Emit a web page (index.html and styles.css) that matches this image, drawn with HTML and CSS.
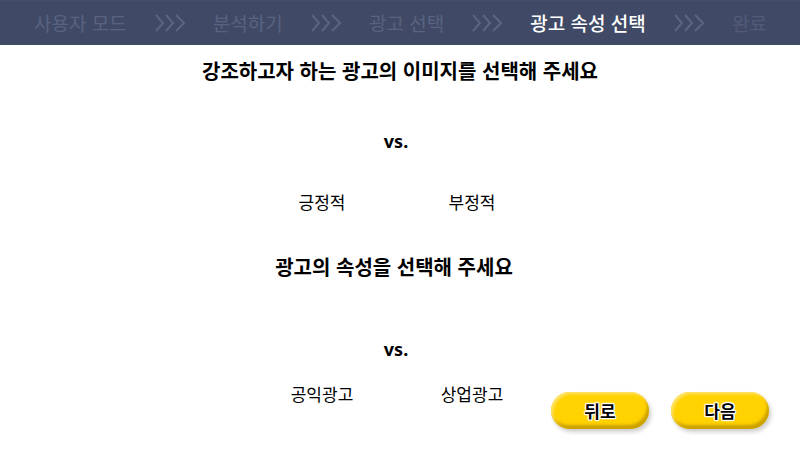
FILE: index.html
```html
<!DOCTYPE html>
<html lang="ko">
<head>
<meta charset="utf-8">
<title>광고 속성 선택</title>
<link rel="stylesheet" href="styles.css">
</head>
<body>
<header>
  <ol class="steps">
    <li>사용자 모드</li>
    <li class="arrow" aria-hidden="true"><svg width="30" height="18" viewBox="0 0 30 18"><path d="M1 1l7 8-7 8M11 1l7 8-7 8M21 1l8 8-8 8"/></svg></li>
    <li>분석하기</li>
    <li class="arrow" aria-hidden="true"><svg width="30" height="18" viewBox="0 0 30 18"><path d="M1 1l7 8-7 8M11 1l7 8-7 8M21 1l8 8-8 8"/></svg></li>
    <li>광고 선택</li>
    <li class="arrow" aria-hidden="true"><svg width="30" height="18" viewBox="0 0 30 18"><path d="M1 1l7 8-7 8M11 1l7 8-7 8M21 1l8 8-8 8"/></svg></li>
    <li class="current" aria-current="step">광고 속성 선택</li>
    <li class="arrow" aria-hidden="true"><svg width="30" height="18" viewBox="0 0 30 18"><path d="M1 1l7 8-7 8M11 1l7 8-7 8M21 1l8 8-8 8"/></svg></li>
    <li class="last">완료</li>
  </ol>
</header>
<main>
  <section class="image-choice">
    <h1>강조하고자 하는 광고의 이미지를 선택해 주세요</h1>
    <p class="versus">vs.</p>
    <div class="options"><span>긍정적</span><span>부정적</span></div>
  </section>
  <section class="type-choice">
    <h2>광고의 속성을 선택해 주세요</h2>
    <p class="versus">vs.</p>
    <div class="options"><span>공익광고</span><span>상업광고</span></div>
  </section>
</main>
<footer>
  <button type="button">뒤로</button>
  <button type="button">다음</button>
</footer>
</body>
</html>
```
FILE: styles.css
```css
* {
  box-sizing: border-box;
}

body {
  margin: 0;
  background: #fff;
  color: #000;
  font-family: "Noto Sans CJK KR", sans-serif;
}

header {
  background: #404a66;
  border-top: 1px solid #454e6a;
}

.steps {
  display: flex;
  align-items: center;
  justify-content: space-between;
  margin: 0;
  padding: 0 33px 0 34px;
  list-style: none;
  color: #596380;
  font-size: 19px;
  line-height: 44px;
  white-space: nowrap;
}

.arrow {
  display: flex;
}

.arrow path {
  fill: none;
  stroke: #5b6582;
  stroke-width: 2;
}

.steps .current {
  color: #fff;
  font-weight: 500;
}

.steps .last {
  color: #525c79;
}

section {
  display: flex;
  flex-direction: column;
  align-items: center;
}

h1,
h2,
.versus {
  margin: 0;
  font-size: 20px;
  font-weight: 700;
  line-height: 28px;
}

.image-choice {
  padding-top: 12px;
}

.type-choice {
  padding-top: 39px;
}

.versus {
  margin-left: -8px;
  font-family: "Noto Sans", "Noto Sans CJK KR", sans-serif;
  font-size: 18px;
}

h2 {
  margin-left: -12px;
}

.image-choice .versus {
  margin-top: 42px;
}

.type-choice .versus {
  margin-top: 54px;
}

.options {
  display: grid;
  grid-template-columns: 150px 150px;
  justify-content: center;
  margin-left: -6px;
  font-size: 17px;
  line-height: 24px;
  text-align: center;
}

.image-choice .options {
  margin-top: 35px;
}

.type-choice .options {
  margin-top: 19px;
}

footer {
  display: flex;
  justify-content: flex-end;
  gap: 22px;
  margin-top: -14px;
  padding: 0 31px 20px 0;
}

button {
  width: 98px;
  height: 37px;
  padding: 0;
  border: 0;
  border-radius: 19px;
  background: #ffd200;
  box-shadow:
    inset 2px 2px 3px #ffe36e,
    inset -2px -4px 3px #cba000,
    2px 3px 4px rgba(0, 0, 0, 0.2);
  color: #000;
  font-family: inherit;
  font-size: 17px;
  font-weight: 700;
  line-height: 37px;
  text-shadow:
    1px 0 1px #fff,
    -1px 0 1px #fff,
    0 1px 1px #fff,
    0 -1px 1px #fff,
    1px 1px 1px #fff,
    -1px -1px 1px #fff,
    1px -1px 1px #fff,
    -1px 1px 1px #fff;
}
```
